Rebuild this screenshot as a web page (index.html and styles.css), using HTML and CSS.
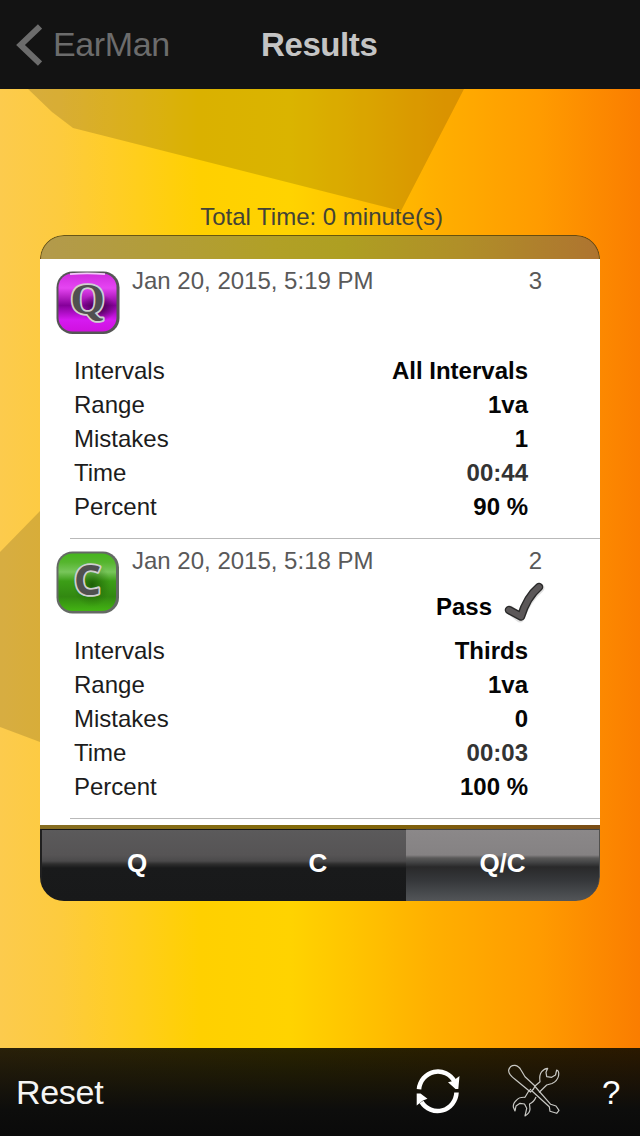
FILE: index.html
```html
<!DOCTYPE html>
<html lang="en">
<head>
<meta charset="utf-8">
<title>Results</title>
<link rel="stylesheet" href="styles.css">
</head>
<body>
<div class="app">
  <svg class="shapes" viewBox="0 0 640 1136" aria-hidden="true">
    <path d="M28 89L52 112L73 128L401 211L464 89ZM0 552L40 511V742L0 727Z" fill="#000" fill-opacity=".145"/>
  </svg>
  <header class="navbar">
    <div class="back">
      <svg class="chevron" width="26" height="42" viewBox="0 0 26 42"><path d="M24 2.500L4.500 21L24 39.500" fill="none" stroke="#6c6c6c" stroke-width="6"/></svg>
      <span class="back-label">EarMan</span>
    </div>
    <h1 class="title">Results</h1>
  </header>
  <main class="content">
    <p class="total">Total Time: 0 minute(s)</p>
    <section class="panel">
      <div class="panel-top"></div>
      <div class="list">
        <article class="result">
          <div class="result-head">
            <svg class="badge" width="64" height="64" viewBox="0 0 64 64">
              <defs>
                <linearGradient id="purple" x2="0" y2="1"><stop offset="0" stop-color="#d12bdd"/><stop offset=".25" stop-color="#e545f2"/><stop offset=".4" stop-color="#b721c5"/><stop offset=".55" stop-color="#85009a"/><stop offset=".8" stop-color="#d61af0"/><stop offset="1" stop-color="#d010e0"/></linearGradient>
                <radialGradient id="purpleShade"><stop offset="0" stop-color="#300038" stop-opacity=".95"/><stop offset="1" stop-color="#400048" stop-opacity="0"/></radialGradient>
              </defs>
              <rect x=".5" y=".5" width="63" height="62.500" rx="16" fill="#555"/>
              <rect x="2.500" y="2.500" width="58" height="58" rx="14" fill="url(#purple)"/>
              <ellipse cx="42" cy="37" rx="18" ry="14" fill="url(#purpleShade)"/>
              <path d="M14 3.200Q31 1.500 49 3.200" stroke="#f3c8fa" stroke-width="1.800" fill="none"/>
              <text class="glyph glyph-q" x="31.500" y="43" text-anchor="middle">Q</text>
            </svg>
            <span class="date">Jan 20, 2015, 5:19 PM</span>
            <span class="count">3</span>
          </div>
          <dl class="facts">
            <dt>Intervals</dt><dd>All Intervals</dd>
            <dt>Range</dt><dd>1va</dd>
            <dt>Mistakes</dt><dd>1</dd>
            <dt>Time</dt><dd class="clock">00:44</dd>
            <dt>Percent</dt><dd>90 %</dd>
          </dl>
        </article>
        <article class="result">
          <div class="result-head">
            <svg class="badge" width="64" height="64" viewBox="0 0 64 64">
              <defs>
                <linearGradient id="green" x2="0" y2="1"><stop offset="0" stop-color="#45b51c"/><stop offset=".15" stop-color="#55b52e"/><stop offset=".32" stop-color="#78c65b"/><stop offset=".48" stop-color="#3c9e17"/><stop offset=".75" stop-color="#328811"/><stop offset="1" stop-color="#43b413"/></linearGradient>
                <radialGradient id="greenShade"><stop offset="0" stop-color="#104800" stop-opacity=".7"/><stop offset="1" stop-color="#206000" stop-opacity="0"/></radialGradient>
              </defs>
              <rect x=".5" y=".5" width="62.500" height="62" rx="16" fill="#646964"/>
              <rect x="2.500" y="2.500" width="57.500" height="57.500" rx="14" fill="url(#green)"/>
              <ellipse cx="36" cy="34" rx="19" ry="22" fill="url(#greenShade)"/>
              <text class="glyph glyph-c" x="31.500" y="44" text-anchor="middle">C</text>
            </svg>
            <span class="date">Jan 20, 2015, 5:18 PM</span>
            <span class="count">2</span>
            <span class="pass">Pass
              <svg class="check" width="42" height="42" viewBox="0 0 42 42"><path d="M7 29L17 37Q24 18 37 7" fill="none" stroke="#aaa" stroke-width="9" stroke-linecap="round" stroke-linejoin="round" opacity=".35"/><path d="M6 29L18 35.500Q24 16 36 6" fill="none" stroke="#292929" stroke-width="8.500" stroke-linecap="round" stroke-linejoin="round"/><path d="M6 29L18 35.500Q24 16 36 6" fill="none" stroke="#5b5758" stroke-width="5.800" stroke-linecap="round" stroke-linejoin="round"/></svg>
            </span>
          </div>
          <dl class="facts">
            <dt>Intervals</dt><dd>Thirds</dd>
            <dt>Range</dt><dd>1va</dd>
            <dt>Mistakes</dt><dd>0</dd>
            <dt>Time</dt><dd class="clock">00:03</dd>
            <dt>Percent</dt><dd>100 %</dd>
          </dl>
        </article>
      </div>
      <nav class="tabs">
        <span class="tab tab-first">Q</span>
        <span class="tab">C</span>
        <span class="tab tab-active">Q/C</span>
      </nav>
    </section>
  </main>
  <footer class="toolbar">
    <span class="reset">Reset</span>
    <svg class="refresh" width="46" height="50" viewBox="0 0 46 50">
      <path d="M3 23.200A19 19.500 0 0 1 38.500 15.500M40.500 26.500A19 19.500 0 0 1 5.500 36" fill="none" stroke="#fff" stroke-width="4.600"/>
      <path d="M43.500 10L42.300 23L39.500 23L32 16.200L37 15ZM.7 39.500V27.500H4.500L11.500 32.800L7 34.500Z" fill="#fff"/>
    </svg>
    <svg class="tools" width="54" height="54" viewBox="0 0 54 54" fill="none" stroke="#c8c8c4" stroke-width="1.200" stroke-linejoin="round">
      <path d="M21.300 27L7 15.300Q0 10 .7 6Q2 1 7 1.300Q11 2 13 6L17 12.700L27 22L25.500 25L22.500 28Z"/>
      <path d="M27 22.500L42.700 40.300L48 42L51 46.300L48.700 49.300L42 47.300L41.300 42.700L24 27"/>
      <path d="M27 22L32 17.700Q31 11 33.700 7.700Q36 4.500 39.700 4.300L38 8.300L38.700 12.700L43.700 13.300L47.500 11L48.700 6Q51.500 7 50.500 12Q49.500 17 44 19.500L38.700 21L31 28.500M23 25L20.300 27.700L17 33.300Q11 33 8.700 36Q5 39 5.300 43L7 47L8 42L12 39.300L16.500 40L18.700 44.300L17 52Q22 49 22 45L21.500 40Q26 38 28 33"/>
    </svg>
    <span class="help">?</span>
  </footer>
</div>
</body>
</html>
```

FILE: styles.css
```css
* { box-sizing: border-box; }
body { margin: 0; font-family: "Liberation Sans", Arial, sans-serif; }
.app {
  position: relative;
  display: flex;
  flex-direction: column;
  width: 640px;
  height: 1136px;
  overflow: hidden;
  background: linear-gradient(90deg, #fccb4d 0, #fdcb3e 60px, #ffcd28 110px, #ffd000 200px, #ffd300 290px, #ffc500 350px, #ffb000 430px, #ff9b00 540px, #fb8300 620px, #fa7d00 640px);
}
.shapes { position: absolute; inset: 0; width: 640px; height: 1136px; }
.navbar {
  position: relative;
  display: grid;
  grid-template-columns: 262px 1fr;
  align-items: center;
  height: 89px;
  background: #131313;
}
.back { display: flex; align-items: center; padding-left: 16px; }
.chevron { flex: none; margin-right: 11px; }
.back-label { font-size: 34px; letter-spacing: -.4px; color: #6c6c6c; }
.title { margin: 0 0 0 -1px; font-size: 33px; font-weight: bold; letter-spacing: -.4px; color: #c4c4c4; }
.content {
  position: relative;
  display: flex;
  flex-direction: column;
  flex: 1;
  padding: 112px 40px 0;
}
.total { margin: 0 0 2px 3px; height: 32px; text-align: center; font-size: 24px; line-height: 32px; color: #434336; }
.panel {
  display: flex;
  flex-direction: column;
  height: 666px;
  border-radius: 24px;
  overflow: hidden;
}
.panel-top {
  height: 24px;
  border: 1px solid rgba(65, 50, 0, .65);
  border-bottom: 0;
  border-radius: 24px 24px 0 0;
  background: linear-gradient(90deg, #b39a4c, #b1a026 42%, #ae9f22 54%, #b08f28 75%, #ae7430);
}
.list { height: 566px; background: #fff; }
.result { height: 280px; }
.result::after { content: ""; display: block; height: 1px; margin-left: 30px; background: #b9b9b9; }
.result-head {
  display: grid;
  grid-template: 35px 1fr / 76px 1fr 42px;
  height: 94px;
  padding: 4px 58px 0 16px;
  font-size: 24px;
  line-height: 35px;
  color: #595959;
}
.badge { grid-row: 1 / 3; margin-top: 8px; }
.date { grid-column: 2; }
.count { grid-column: 3; text-align: right; }
.pass {
  grid-column: 2 / 4;
  display: flex;
  justify-content: flex-end;
  align-items: center;
  gap: 11px;
  height: 42px;
  margin-top: 7px;
  margin-right: -3px;
  font-weight: bold;
  color: #000;
}
.check { margin-top: -8px; }
.facts {
  display: grid;
  grid-template-columns: 1fr auto;
  grid-auto-rows: 34px;
  height: 185px;
  margin: 0;
  padding: 1px 72px 0 34px;
  font-size: 24px;
  line-height: 34px;
  color: #1c1c1c;
}
.facts dd { margin: 0; text-align: right; font-weight: bold; color: #050505; }
.facts .clock { color: #333; }
.glyph { font-weight: bold; paint-order: stroke; fill: #505050; stroke: #d0d0d0; stroke-width: 3.6px; stroke-linejoin: round; }
.glyph-q { font-family: "Liberation Serif", serif; font-size: 44px; }
.glyph-c { font-family: "Noto Sans", sans-serif; font-size: 42px; }
.tabs {
  display: grid;
  grid-template-columns: 183px 183px 194px;
  height: 76px;
  border-style: solid;
  border-image: linear-gradient(90deg, #866d22, #826a08 50%, #7a4d16) 1;
  border-width: 4px 0 0;
}
.tab {
  padding-left: 9px;
  border-top: 1px solid #161616;
  text-align: center;
  font-size: 26px;
  font-weight: bold;
  line-height: 67px;
  color: #fff;
  background: linear-gradient(#5b5a5b, #565455 25px, #4b4a4b 31px, #2e2e2e 34px, #191a1b 38px, #18191a);
}
.tab + .tab { padding-left: 7px; }
.tab-first { border-left: 2px solid #202020; }
.tab.tab-active {
  padding-left: 0;
  border-top-color: #444;
  background: linear-gradient(#8b8889, #858283 25px, #5a5959 28px, #454647 32px, #29292a 37px, #35373a 50px, #54575a 72px);
  border-right: 1px solid #51504e;
  border-radius: 0 0 24px 0;
}
.toolbar {
  position: relative;
  display: flex;
  align-items: center;
  height: 88px;
  padding-left: 16px;
  background: linear-gradient(rgba(0,0,0,0), #0d0d0c 70%, #0a0a0a), linear-gradient(90deg, #292009, #292300 45%, #2b1900);
  color: #fff;
}
.reset { width: 400px; font-size: 34px; letter-spacing: -.3px; color: #f5f5f4; }
.refresh { margin-top: -2px; }
.tools { margin: -2px 0 0 46px; }
.help { margin: 1px 0 0 40px; font-size: 33px; }
```
